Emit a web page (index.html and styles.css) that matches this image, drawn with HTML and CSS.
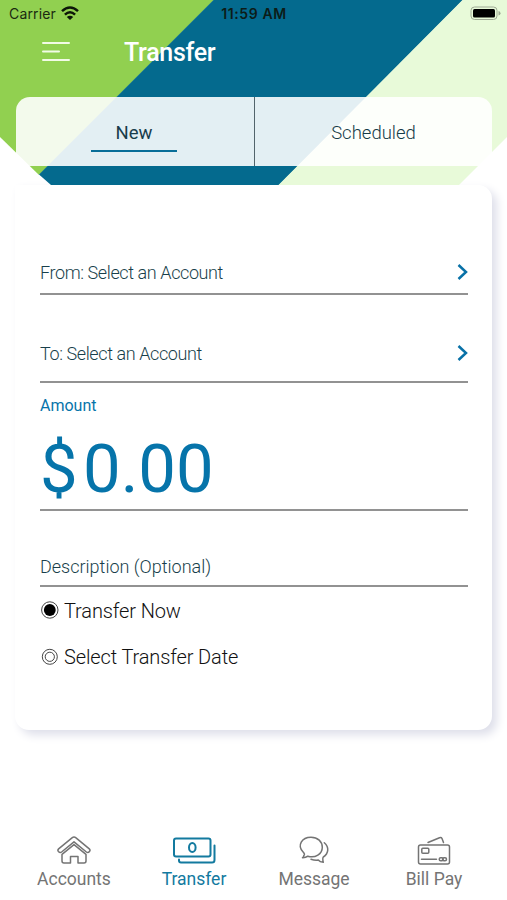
FILE: index.html
```html
<!DOCTYPE html>
<html lang="en">
<head>
<meta charset="utf-8">
<meta name="viewport" content="width=device-width, initial-scale=1">
<title>Transfer</title>
<link rel="stylesheet" href="styles.css">
</head>
<body>
<div class="app">
  <header class="header">
    <svg class="header-art" viewBox="0 0 507 185" aria-hidden="true">
      <path fill="#91d050" d="M0 0H214L39 175L0 137Z"/>
      <path fill="#046a8e" d="M213.500 0H463L279 185H51L39 174.500Z"/>
      <path fill="#e8fad9" d="M462.500 0H507V137L459 185H278.500Z"/>
    </svg>
    <div class="status">
      <div class="carrier"><span>Carrier</span>
        <svg width="18" height="14" viewBox="0 0 18 14" fill="none" stroke="#0c1608" stroke-width="2.500"><path d="M1 5.200Q9-2.200 17 5.200M3.900 8.600Q9 4 14.100 8.600"/><path fill="#0c1608" stroke="none" d="M5.800 10.900Q9 8.400 12.200 10.900L9 13.900Z"/></svg>
      </div>
      <time class="clock">11:59 AM</time>
      <svg class="battery" width="31" height="15" viewBox="0 0 31 15"><rect x="1" y="1" width="26" height="12.500" rx="3.500" fill="none" stroke="#9eaa94"/><rect x="3" y="3" width="22" height="8.500" rx="1.500" fill="#000"/><path fill="#9eaa94" d="M28.500 5Q30.500 5.500 30.500 7.300T28.500 9.500Z"/></svg>
    </div>
    <div class="titlebar">
      <svg class="menu" width="28" height="21" viewBox="0 0 28 21" stroke="#f2fbe6" stroke-width="2" stroke-linecap="round"><path d="M1 1H27M1 9.500H17M1 18H27"/></svg>
      <h1>Transfer</h1>
    </div>
    <nav class="tabs">
      <a class="tab active"><span>New</span></a>
      <a class="tab"><span>Scheduled</span></a>
    </nav>
  </header>
  <main class="card">
    <div class="row from"><span>From: Select an Account</span><svg class="chev" width="12" height="18" viewBox="0 0 12 18"><path d="M2.500 2L10 9L2.500 16"/></svg></div>
    <div class="row to"><span>To: Select an Account</span><svg class="chev" width="12" height="18" viewBox="0 0 12 18"><path d="M2.500 2L10 9L2.500 16"/></svg></div>
    <div class="amount"><label>Amount</label><div class="value"><span class="currency">$</span><span class="digits">0.00</span></div></div>
    <div class="row description"><span>Description (Optional)</span></div>
    <div class="option now"><svg width="20" height="20" viewBox="0 0 20 20"><circle cx="9.800" cy="9" r="8.200" fill="none" stroke="#444"/><circle cx="9.800" cy="9" r="5.900" fill="#000"/></svg><span>Transfer Now</span></div>
    <div class="option later"><svg width="20" height="20" viewBox="0 0 20 20" fill="none" stroke="#444"><circle cx="9.800" cy="9.800" r="7.500"/><circle cx="9.800" cy="9.800" r="4.600"/></svg><span>Select Transfer Date</span></div>
  </main>
  <footer class="bottom">
    <a class="item accounts"><svg width="48" height="30" viewBox="0 0 48 30"><path d="M8.400 15.500Q7.300 14.200 8.600 12.900L22 1.800Q24 .4 26 1.800L39.300 12.900Q40.600 14.200 39.500 15.500Q38 17.200 36.400 16L24 5.800L11.600 16Q10 17.200 8.400 15.500Z"/><path d="M12 18.300L24 8.600L36 18.300V25Q36 27 34 27H28V20.500H20.500V27H14Q12 27 12 25Z"/></svg><span>Accounts</span></a>
    <a class="item transfer"><svg width="48" height="30" viewBox="0 0 48 30" class="money"><rect x="4" y="2.500" width="36.500" height="18" rx="2"/><ellipse cx="22.300" cy="11.500" rx="3.300" ry="4.500"/><path d="M9 23.500V24.500Q9 26.500 11 26.500H42Q44.500 26.500 44.500 24V9.500"/></svg><span>Transfer</span></a>
    <a class="item message"><svg width="48" height="30" viewBox="0 0 48 30"><path d="M13.800 19.500Q15.400 18.300 13.100 16C6.800 9.500 11.800 1.200 21 1.200C27.800 1.200 32.300 5.700 32.300 11.200C32.300 18 25.300 22.500 17.800 20.200Q15.800 21.800 12.500 21.700Q13.800 21 13.800 19.500Z"/><path d="M34.300 6.800C39.300 11 38.800 17.500 33.300 21Q32.300 22.100 33.300 26.300Q29.800 26.100 28.300 24Q24.800 24.500 21 23.200"/></svg><span>Message</span></a>
    <a class="item pay"><svg width="48" height="30" viewBox="0 0 48 30"><rect x="8.500" y="9" width="31" height="19" rx="2"/><rect x="11.800" y="12.200" width="7" height="5" rx="1"/><path d="M11.500 23.300H26.500M18 6.500L29.500 1.700Q31.300 1 32 2.500L33.500 6.500"/><rect x="29.200" y="21.800" width="4" height="3" rx="1.500"/><rect x="32.500" y="21.800" width="4" height="3" rx="1.500"/></svg><span>Bill Pay</span></a>
  </footer>
</div>
</body>
</html>
```
FILE: styles.css
```css
* { box-sizing: border-box; }
body { margin: 0; background: #fff; font-family: Roboto, "Liberation Sans", sans-serif; }
.app { width: 507px; height: 900px; display: flex; flex-direction: column; overflow: hidden; }
.header { position: relative; z-index: 1; height: 185px; flex: none; }
.header-art { position: absolute; inset: 0; width: 507px; height: 185px; z-index: -1; }
.status { height: 27px; display: grid; grid-template-columns: 1fr auto 1fr; align-items: center; padding: 0 6px 0 7px; font-family: Inter, sans-serif; font-size: 14px; color: #0c1c18; }
.carrier { display: flex; align-items: center; gap: 5px; color: #1b2a10; padding-left: 2px; letter-spacing: .15px; }
.carrier svg { margin-top: -2px; }
.clock { font-weight: 600; letter-spacing: .6px; }
.battery { justify-self: end; margin-top: -1px; }
.titlebar { height: 70.400px; display: flex; padding: 15.400px 0 0 42px; }
.menu { flex: none; }
h1 { margin: -4px 0 0 54px; font-size: 25px; line-height: 30px; font-weight: 500; letter-spacing: -.3px; color: #fff; }
.tabs { height: 69px; margin: 0 15px 0 16px; display: grid; grid-template-columns: 239px 1fr; background: rgba(255,255,255,.89); border-radius: 14px 14px 0 0; }
.tab { display: flex; justify-content: center; padding-top: 24.300px; font-size: 18.500px; line-height: 23px; font-weight: 300; color: #163c48; }
.tab.active { border-right: 1px solid #52646b; font-weight: 400; color: #173d4b; padding-right: 2px; }
.active span { width: 86px; height: 30px; text-align: center; border-bottom: 2px solid #086e98; }
.card { width: 477px; height: 545px; margin-left: 15px; padding: 0 24px 0 25px; flex: none; border-radius: 0 14px 14px 14px; background: #fff; box-shadow: 5px 5px 10px #dedfea; }
.row { display: flex; justify-content: space-between; border-bottom: 2px solid #929292; color: #183f4b; font-size: 18px; line-height: 22px; font-weight: 300; }
.row span { letter-spacing: -.4px; }
.from { height: 110px; padding-top: 77px; }
.to { height: 88px; padding-top: 48px; }
.chev { fill: none; stroke: #0871a7; stroke-width: 2.500; margin-top: 1px; }
.amount { height: 128px; border-bottom: 2px solid #929292; color: #0674aa; padding-top: 13px; }
label { display: block; font-size: 16px; line-height: 20px; }
.value { display: flex; font-size: 67px; line-height: 80px; margin-top: 13px; }
.currency { width: 43px; }
.description { height: 76px; padding-top: 45px; }
.description span { letter-spacing: 0; }
.option { display: flex; align-items: center; gap: 4px; font-size: 20px; line-height: 24px; font-weight: 300; letter-spacing: -.12px; color: #111; }
.now { margin-top: 12px; }
.later { margin-top: 22px; }
.bottom { display: grid; grid-template-columns: repeat(4, 120px); margin: 106px 13px 0 14px; }
.item { display: flex; flex-direction: column; align-items: center; color: #747474; font-size: 17.500px; line-height: 22px; }
.item svg { fill: none; stroke: currentColor; stroke-width: 1.500; stroke-linejoin: round; stroke-linecap: round; margin-bottom: 2px; }
.item .money { stroke-width: 2; }
.item.transfer { color: #137a9f; }
```
